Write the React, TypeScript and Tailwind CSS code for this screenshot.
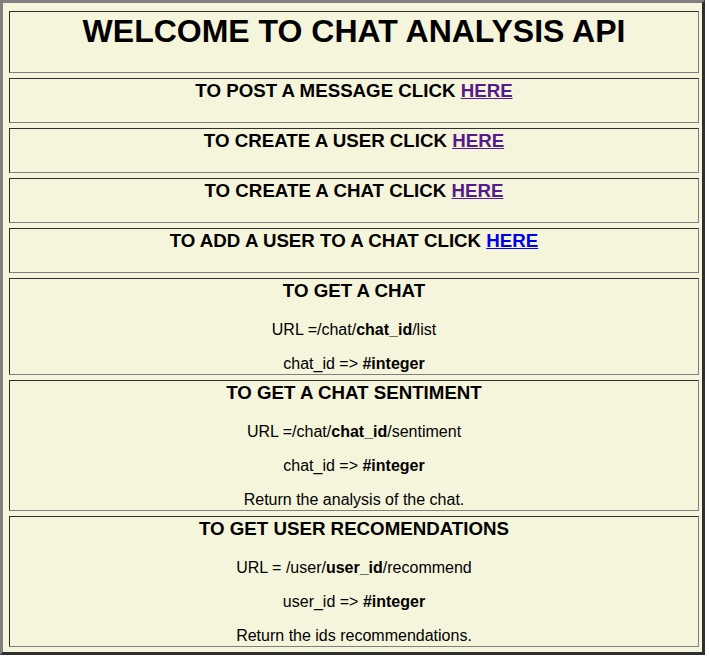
import React from "react";

const cell =
  "border border-t-[#2e2e2e] border-l-[#2e2e2e] border-b-[#808080] border-r-[#808080] p-[1px] text-center";

function Link({ visited = true }: { visited?: boolean }) {
  return (
    <a
      href="#"
      className={
        visited
          ? "text-[#551a8b] underline underline-offset-auto"
          : "text-[#0000ee] underline underline-offset-auto"
      }
    >
      HERE
    </a>
  );
}

function H3({ children }: { children: React.ReactNode }) {
  return <h3 className="text-[18.72px] font-bold leading-[22px] mb-[19px]">{children}</h3>;
}

function P({ children, last = false }: { children: React.ReactNode; last?: boolean }) {
  return (
    <p className={last ? "text-[16px] leading-[18px]" : "text-[16px] leading-[18px] mb-[16px]"}>
      {children}
    </p>
  );
}

export default function App() {
  return (
    <div className="bg-white min-h-[658px] font-['Liberation_Sans',Arial,sans-serif] text-black">
      <div className="w-[705px] h-[655px] bg-[#f5f5dc] border-[3px] border-t-[#808080] border-l-[#808080] border-r-[#2e2e2e] border-b-[#2e2e2e] pl-[6px] pr-[3px] pt-[8px] pb-[5px] flex flex-col gap-[5px]">
        <div className={cell}>
          <h1 className="text-[32px] font-bold leading-[37px] mb-[21px]">
            WELCOME TO CHAT ANALYSIS API
          </h1>
        </div>
        <div className={cell}>
          <H3>
            TO POST A MESSAGE CLICK <Link />
          </H3>
        </div>
        <div className={cell}>
          <H3>
            TO CREATE A USER CLICK <Link />
          </H3>
        </div>
        <div className={cell}>
          <H3>
            TO CREATE A CHAT CLICK <Link />
          </H3>
        </div>
        <div className={cell}>
          <H3>
            TO ADD A USER TO A CHAT CLICK <Link visited={false} />
          </H3>
        </div>
        <div className={cell}>
          <H3>TO GET A CHAT</H3>
          <P>
            URL =/chat/<b>chat_id</b>/list
          </P>
          <P last>
            chat_id =&gt; <b>#integer</b>
          </P>
        </div>
        <div className={cell}>
          <H3>TO GET A CHAT SENTIMENT</H3>
          <P>
            URL =/chat/<b>chat_id</b>/sentiment
          </P>
          <P>
            chat_id =&gt; <b>#integer</b>
          </P>
          <P last>Return the analysis of the chat.</P>
        </div>
        <div className={cell}>
          <H3>TO GET USER RECOMENDATIONS</H3>
          <P>
            URL = /user/<b>user_id</b>/recommend
          </P>
          <P>
            user_id =&gt; <b>#integer</b>
          </P>
          <P last>Return the ids recommendations.</P>
        </div>
      </div>
    </div>
  );
}
